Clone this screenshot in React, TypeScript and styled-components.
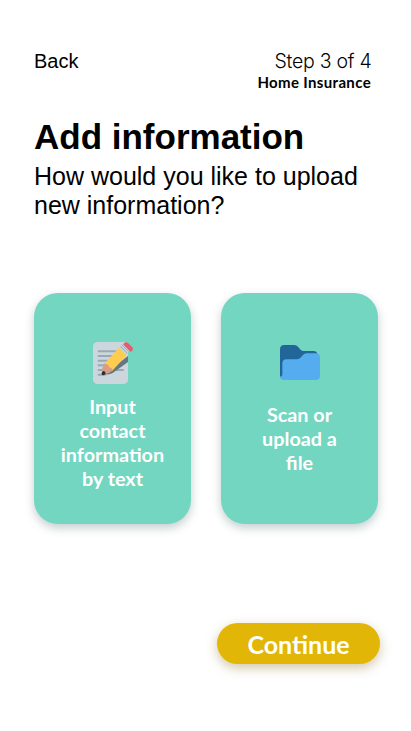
import React from "react";
import styled, { createGlobalStyle } from "styled-components";

const GlobalStyle = createGlobalStyle`
  * { box-sizing: border-box; }
  html, body { margin: 0; background: #fff; }
  button { border: 0; padding: 0; background: none; color: inherit; font: inherit; cursor: pointer; }
`;

const Screen = styled.main`
  width: 411px;
  height: 731px;
  padding: 49px 31px 0 34px;
  overflow: hidden;
  display: flex;
  flex-direction: column;
  background: #fff;
  color: #000;
  font-family: "Liberation Sans", Arial, sans-serif;
`;

const Header = styled.header`
  display: flex;
  justify-content: space-between;
  align-items: flex-start;
  height: 66px;
  padding-right: 9px;
`;

const BackButton = styled.button`
  font-size: 20px;
  line-height: 24px;
`;

const Progress = styled.div`
  display: flex;
  flex-direction: column;
  align-items: flex-end;
`;

const Step = styled.span`
  font: 300 19.5px/24px Inter, sans-serif;
  letter-spacing: -0.25px;
  margin-right: -0.5px;
`;

const Product = styled.span`
  font: 700 15px/20px Lato, sans-serif;
  letter-spacing: 0.35px;
  margin-top: -1px;
`;

const Title = styled.h1`
  margin: 0;
  font-size: 35px;
  line-height: 44px;
  font-weight: 700;
  white-space: nowrap;
`;

const Question = styled.p`
  margin: 3px 0 0;
  font-size: 25px;
  line-height: 29px;
`;

const Options = styled.section`
  display: flex;
  gap: 30px;
  margin-top: 73px;
`;

const Card = styled.button<{ $top: number }>`
  width: 157px;
  height: 231px;
  padding-top: ${(p) => p.$top}px;
  display: flex;
  flex-direction: column;
  align-items: center;
  border-radius: 24px;
  background: #72d6c0;
  box-shadow: 0 4px 10px rgba(20, 60, 65, 0.25);
`;

const Label = styled.span<{ $gap: number; $width: number }>`
  width: ${(p) => p.$width}px;
  margin-top: ${(p) => p.$gap}px;
  color: #fff;
  font: 700 19.8px/24px Lato, sans-serif;
  text-align: center;
`;

const Continue = styled.button`
  align-self: flex-end;
  width: 163px;
  height: 41px;
  margin-top: 99px;
  border-radius: 21px;
  background: #e2b607;
  box-shadow: 0 4px 12px rgba(125, 95, 0, 0.35);
  color: #fff;
  font: 700 25px/40px Lato, sans-serif;
`;

const MemoIcon = () => (
  <svg width="40" height="42" viewBox="24 20 120 126" aria-hidden="true">
    <rect x="24" y="20" width="105" height="126" rx="13" fill="#ccd6dd" />
    <path d="M41 48h55M41 62h48M41 76h40M41 90h31M41 104h73M41 118h19" stroke="#99aab5" strokeWidth="6" strokeLinecap="round" />
    <path d="M129 62v18L83 113q-5 3-11 4l-24 2 30-17z" fill="#66757f" />
    <path d="M58 85 103 36l23 22-44 48z" fill="#ffcc4d" />
    <path d="m59 84-7 15-3 20 23-6 12-8q-2-8-11-9-2-9-14-12z" fill="#d99e82" />
    <path d="M54 107q-4 4-4 9 1 4 5 4 5-1 7-6-1-7-8-7z" fill="#292f33" />
    <path d="m103 37 10-11 21 21-10 11z" fill="#ccd6dd" />
    <path d="m106 33 21 21m-17-26 21 21" stroke="#99aab5" strokeWidth="3" />
    <path d="m114 27 4-4q5-5 12 1l12 12q4 6-1 10l-4 4z" fill="#ea596e" />
  </svg>
);

const FolderIcon = () => (
  <svg width="40" height="35" viewBox="24 29 120 106" preserveAspectRatio="none" aria-hidden="true">
    <path d="M24 125V42q0-13 13-13h30q7 0 11 5l7 9q3 4 9 4h30q11 0 12 10L90 90 34 127z" fill="#226699" />
    <path d="M24 125q7 0 7-8V85q0-13 13-13h31q7 0 11-5l7-8q4-5 11-5h27q13 0 13 13v55q0 13-13 13H37q-12 0-13-10z" fill="#55acee" />
  </svg>
);

export default function App() {
  return (
    <>
      <GlobalStyle />
      <Screen>
        <Header>
          <BackButton type="button">Back</BackButton>
          <Progress>
            <Step>Step 3 of 4</Step>
            <Product>Home Insurance</Product>
          </Progress>
        </Header>
        <Title>Add information</Title>
        <Question>
          How would you like to upload
          <br />
          new information?
        </Question>
        <Options>
          <Card type="button" $top={49}>
            <MemoIcon />
            <Label $gap={10} $width={110}>Input contact information by text</Label>
          </Card>
          <Card type="button" $top={52}>
            <FolderIcon />
            <Label $gap={22} $width={84}>Scan or upload a file</Label>
          </Card>
        </Options>
        <Continue type="button">Continue</Continue>
      </Screen>
    </>
  );
}
